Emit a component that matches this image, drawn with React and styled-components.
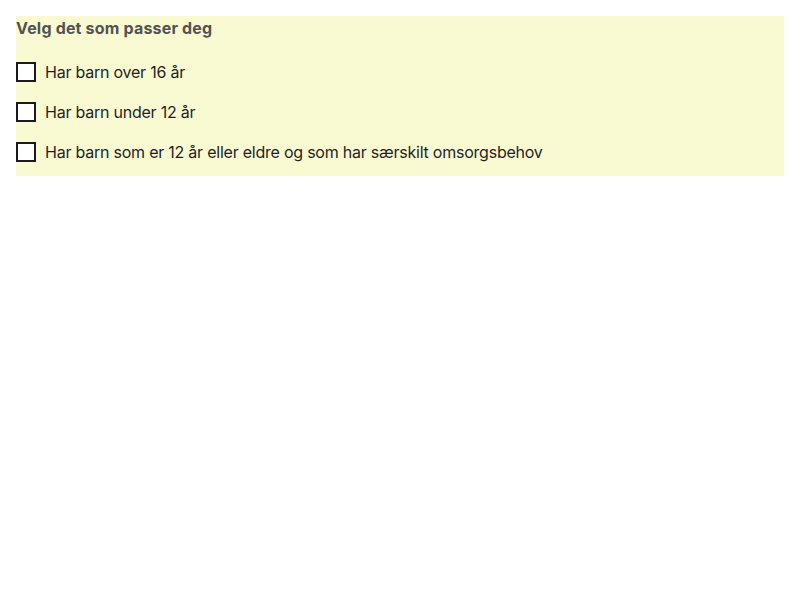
import React from "react";
import styled, { createGlobalStyle } from "styled-components";

const Global = createGlobalStyle`
  html, body { margin: 0; padding: 0; background: #fff; }
  body { font-family: Inter, "Noto Sans", sans-serif; }
`;

const Page = styled.div`
  padding: 16px;
`;

const Panel = styled.fieldset`
  margin: 0;
  padding: 0 0 8px 0;
  border: none;
  background: #fafad2;
  display: flex;
  flex-direction: column;
  gap: 8px;
`;

const Legend = styled.div`
  font-size: 16px;
  line-height: 24px;
  font-weight: 700;
  letter-spacing: 0.18px;
  color: #525252;
  margin-bottom: 8px;
`;

const Row = styled.label`
  display: flex;
  align-items: center;
  gap: 9px;
  height: 32px;
  font-size: 16px;
  letter-spacing: -0.23px;
  color: #1f1f1f;
  cursor: pointer;
`;

const Box = styled.span`
  width: 20px;
  height: 20px;
  box-sizing: border-box;
  border: 2px solid #1a1a1a;
  background: #fff;
  flex: none;
`;

const options = [
  "Har barn over 16 år",
  "Har barn under 12 år",
  "Har barn som er 12 år eller eldre og som har særskilt omsorgsbehov",
];

export default function App() {
  return (
    <>
      <Global />
      <Page>
        <Panel>
          <Legend>Velg det som passer deg</Legend>
          {options.map((o) => (
            <Row key={o}>
              <Box />
              {o}
            </Row>
          ))}
        </Panel>
      </Page>
    </>
  );
}
